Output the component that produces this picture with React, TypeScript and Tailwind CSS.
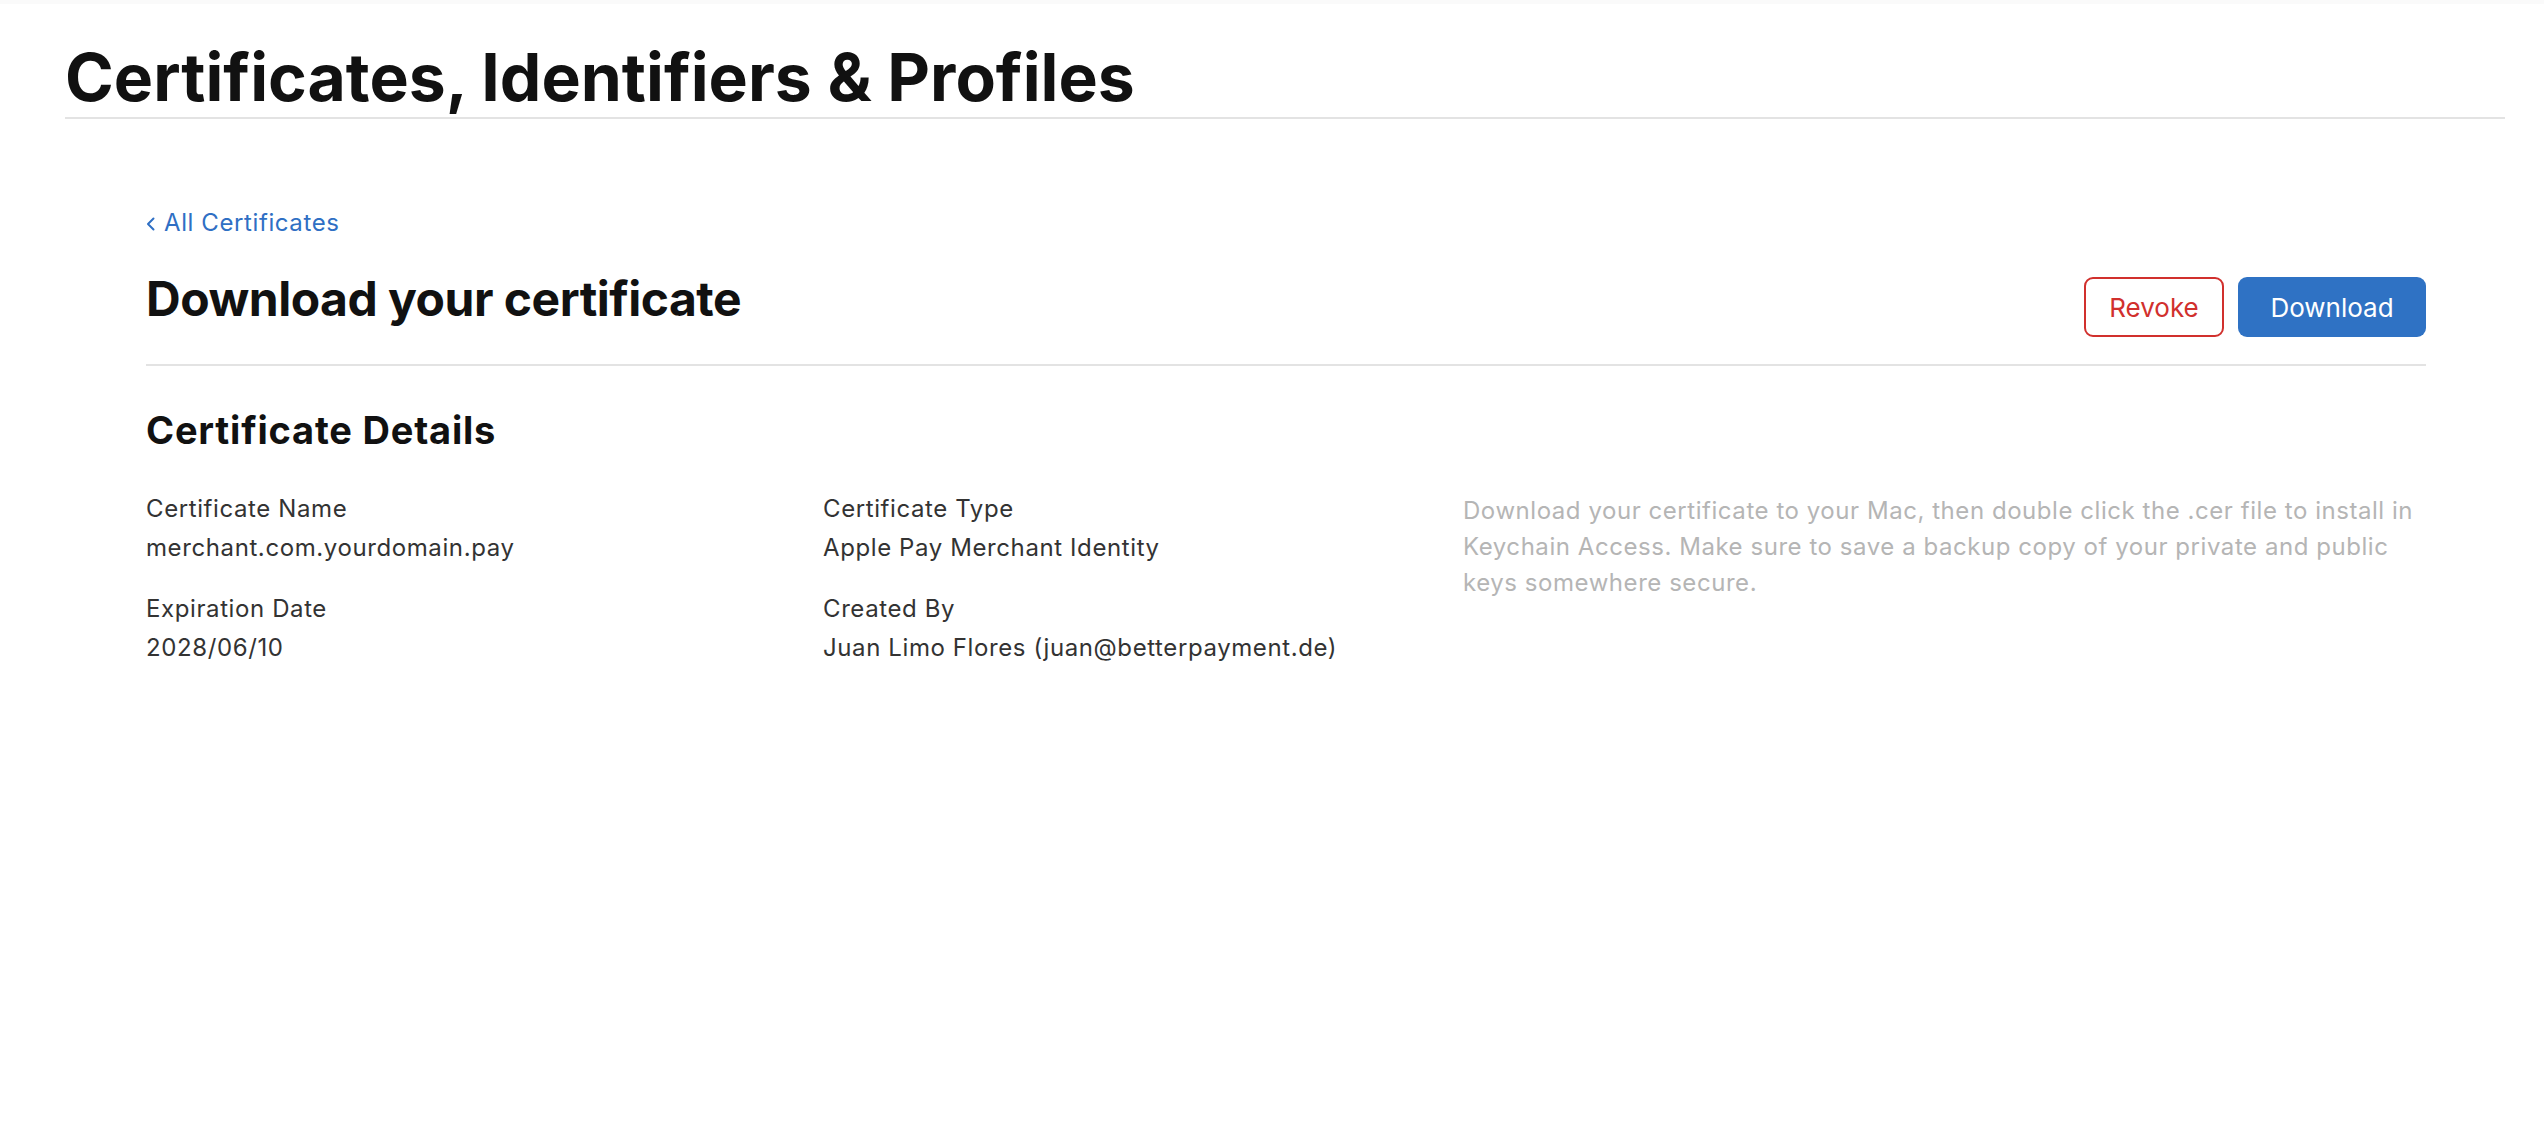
const details = [
  { label: 'Certificate Name', value: 'merchant.com.yourdomain.pay' },
  { label: 'Expiration Date', value: '2028/06/10' },
]

const details2 = [
  { label: 'Certificate Type', value: 'Apple Pay Merchant Identity' },
  { label: 'Created By', value: 'Juan Limo Flores (juan@betterpayment.de)' },
]

function DetailColumn({ items, className }: { items: { label: string; value: string }[]; className: string }) {
  return (
    <div className={className}>
      {items.map((item, i) => (
        <div key={item.label} className={i > 0 ? 'mt-[22px]' : ''}>
          <p className="text-[24px] leading-[39px] tracking-[0.6px] text-[#333]">{item.label}</p>
          <p className="text-[24px] leading-[39px] tracking-[0.6px] text-[#333]">{item.value}</p>
        </div>
      ))}
    </div>
  )
}

export default function App() {
  return (
    <div className="min-h-[1122px] bg-white font-['Inter',sans-serif] text-[#111]">
      <div className="h-[4px] bg-[#fafafa]" />

      <header className="ml-[65px] mr-[39px] border-b-2 border-[#e3e3e3] pt-[40px] pb-[7px]">
        <h1 className="text-[66px] font-bold leading-[66px]">Certificates, Identifiers &amp; Profiles</h1>
      </header>

      <main className="ml-[146px] mr-[118px] pt-[88px]">
        <a href="#" className="flex items-center text-[24px] leading-[32px] tracking-[0.6px] text-[#2f6fc4]">
          <svg width="9" height="14" viewBox="0 0 9 14" className="mr-[9px] mt-[2px]" fill="none">
            <path d="M7.5 1.5 2 7l5.5 5.5" stroke="currentColor" strokeWidth="2" strokeLinecap="round" strokeLinejoin="round" />
          </svg>
          All Certificates
        </a>

        <div className="mt-[32px] flex items-start justify-between border-b-2 border-[#e3e3e3] pb-[27px]">
          <h2 className="text-[48px] font-bold leading-[56px] tracking-[-0.5px]">Download your certificate</h2>
          <div className="mt-[6px] flex gap-[14px]">
            <button className="h-[60px] w-[140px] rounded-[9px] border-2 border-[#d1302d] text-[26px] text-[#d1302d]">
              Revoke
            </button>
            <button className="h-[60px] w-[188px] rounded-[9px] bg-[#2f72c4] text-[26px] text-white">
              Download
            </button>
          </div>
        </div>

        <h3 className="mt-[42px] text-[38px] font-bold leading-[44px] tracking-[0.8px]">Certificate Details</h3>

        <div className="mt-[37px] flex">
          <DetailColumn items={details} className="w-[677px]" />
          <DetailColumn items={details2} className="w-[640px]" />
          <p className="mt-[4px] flex-1 text-[24px] leading-[36px] tracking-[0.55px] text-[#b5b5b5]">
            Download your certificate to your Mac, then double click the .cer file to install in Keychain Access. Make
            sure to save a backup copy of your private and public keys somewhere secure.
          </p>
        </div>
      </main>
    </div>
  )
}
